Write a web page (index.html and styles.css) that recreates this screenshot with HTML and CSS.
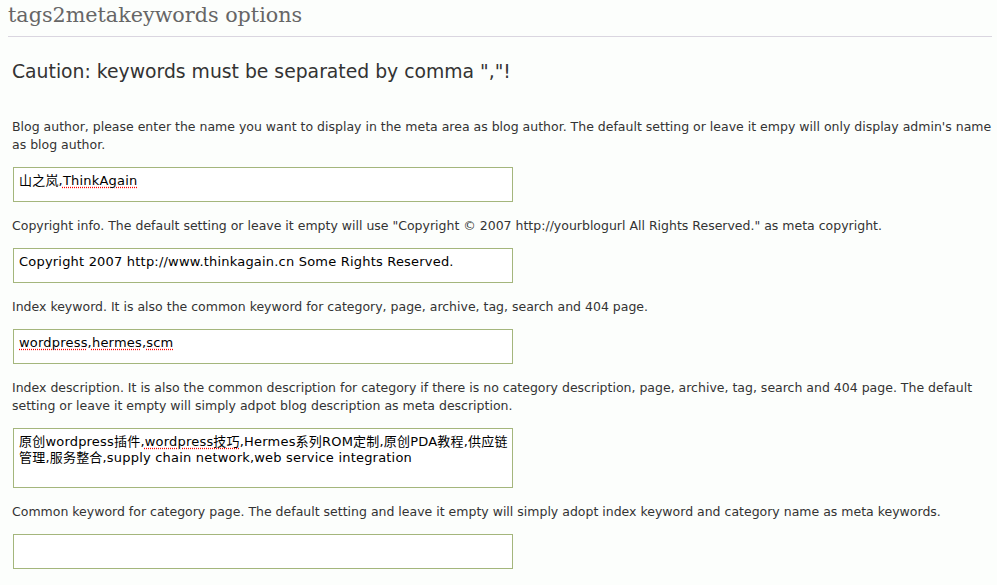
FILE: index.html
```html
<!DOCTYPE html>
<html lang="en">
<head>
<meta charset="utf-8">
<title>tags2metakeywords options</title>
<link rel="stylesheet" href="styles.css">
</head>
<body>
<div class="wrap">
  <h2 class="title">tags2metakeywords options</h2>
  <div class="body">
    <h3 class="caution">Caution: keywords must be separated by comma ","!</h3>
    <p class="desc first">Blog author, please enter the name you want to display in the meta area as blog author. The default setting or leave it empy will only display admin's name as blog author.</p>
    <div class="field" role="textbox">山之岚,<span class="sp">ThinkAgain</span></div>
    <p class="desc">Copyright info. The default setting or leave it empty will use "Copyright © 2007 http://yourblogurl All Rights Reserved." as meta copyright.</p>
    <div class="field" role="textbox">Copyright 2007 http://www.thinkagain.cn Some Rights Reserved.</div>
    <p class="desc">Index keyword. It is also the common keyword for category, page, archive, tag, search and 404 page.</p>
    <div class="field" role="textbox"><span class="sp">wordpress</span>,<span class="sp">hermes</span>,<span class="sp">scm</span></div>
    <p class="desc">Index description. It is also the common description for category if there is no category description, page, archive, tag, search and 404 page. The default setting or leave it empty will simply adpot blog description as meta description.</p>
    <div class="field tall" role="textbox">原创wordpress插件,<span class="sp">wordpress技巧</span>,Hermes系列ROM定制,原创PDA教程,供应链<br>管理,服务整合,supply chain network,web service integration</div>
    <p class="desc">Common keyword for category page. The default setting and leave it empty will simply adopt index keyword and category name as meta keywords.</p>
    <div class="field" role="textbox"></div>
  </div>
</div>
</body>
</html>
```
FILE: styles.css
```css
html, body {
  margin: 0;
  padding: 0;
  background: #fcfefc;
}
.wrap {
  padding: 0 5px 0 8px;
}
.title {
  margin: 0;
  padding: 1px 0 0;
  height: 37px;
  box-sizing: border-box;
  border-bottom: 1px solid #dad6e0;
  font-family: "DejaVu Serif", Georgia, serif;
  font-weight: normal;
  font-size: 20.7px;
  line-height: 28px;
  color: #666666;
}
.body {
  padding-left: 4px;
}
.caution {
  margin: 22px 0 0;
  font-family: "DejaVu Sans", Verdana, sans-serif;
  font-weight: normal;
  font-size: 18.8px;
  line-height: 26px;
  color: #333333;
}
.desc {
  margin: 15px 0 13px;
  font-family: "DejaVu Sans", Verdana, sans-serif;
  font-size: 12.5px;
  line-height: 18px;
  color: #333333;
}
.desc.first {
  margin-top: 33px;
}
.field {
  margin-left: 1px;
  width: 500px;
  height: 35px;
  box-sizing: border-box;
  border: 1px solid #a4b67c;
  background: #ffffff;
  padding: 5px 1px 5px 5px;
  font-family: "DejaVu Sans", "Noto Sans CJK SC", sans-serif;
  font-size: 13px;
  letter-spacing: 0.2px;
  line-height: 16px;
  color: #000000;
  white-space: nowrap;
  overflow: hidden;
}
.field.tall {
  height: 60px;
}
.sp {
  text-decoration: underline dotted #ff0000;
  text-underline-offset: 2px;
}
```
